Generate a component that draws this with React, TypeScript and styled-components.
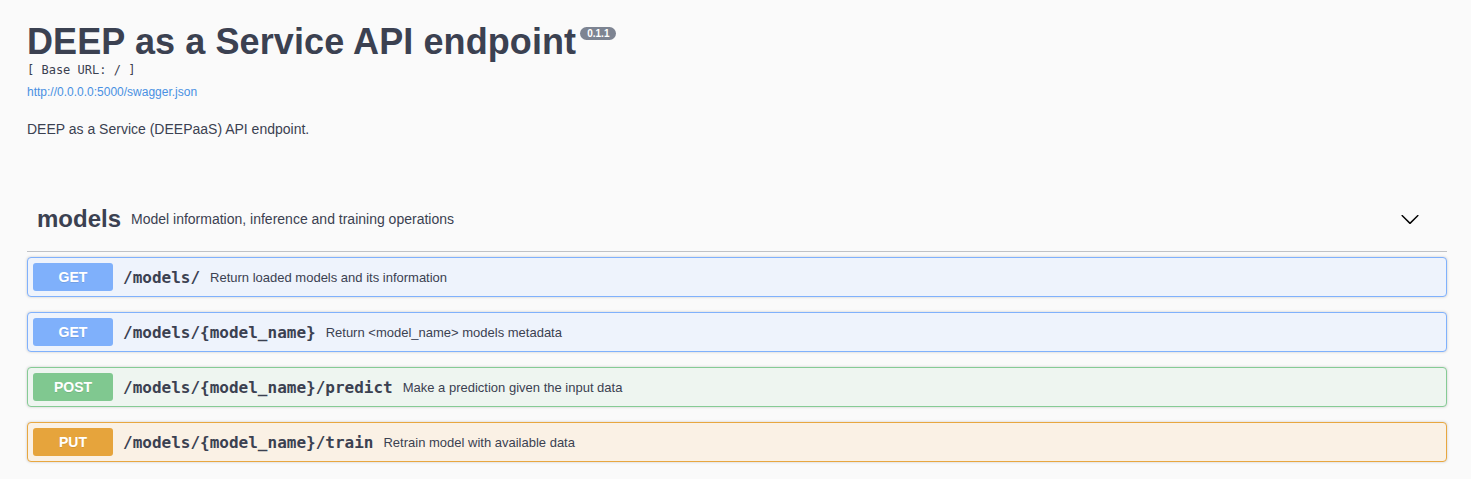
import React from "react";
import styled, { createGlobalStyle } from "styled-components";

const Global = createGlobalStyle`
  html, body { margin: 0; padding: 0; background: #fafafa; }
  body { font-family: "Liberation Sans", Arial, sans-serif; color: #3b4151; }
`;

const Page = styled.div`
  width: 1420px;
  padding: 0 0 0 27px;
`;

const Info = styled.div`
  padding-top: 21px;
`;

const Title = styled.h2`
  margin: 0;
  font-size: 36px;
  font-weight: 700;
  line-height: 42px;
  letter-spacing: 0.1px;
  color: #3b4151;
  display: flex;
  align-items: flex-start;
`;

const Version = styled.small`
  display: inline-block;
  margin: 6px 0 0 4px;
  padding: 1px 7px;
  border-radius: 57px;
  background: #7d8492;
  color: #fff;
  font-size: 10px;
  font-weight: 700;
  line-height: 11px;
  letter-spacing: 0;
  font-family: "Liberation Sans", Arial, sans-serif;
`;

const BaseUrl = styled.pre`
  margin: 0;
  font-family: "DejaVu Sans Mono", monospace;
  font-size: 12px;
  line-height: 14px;
  color: #3b4151;
`;

const Link = styled.a`
  display: block;
  margin-top: 8px;
  font-size: 12px;
  line-height: 14px;
  color: #4990e2;
  text-decoration: none;
`;

const Description = styled.p`
  margin: 22px 0 0;
  font-size: 14px;
  line-height: 16px;
  color: #3b4151;
`;

const Tag = styled.section`
  margin-top: 53px;
`;

const TagHeader = styled.h3`
  margin: 0 0 5px;
  padding: 15px 0 18px 10px;
  display: flex;
  align-items: center;
  border-bottom: 1px solid rgba(59, 65, 81, 0.3);
  font-size: 24px;
  line-height: 28px;
  font-weight: 700;
  color: #3b4151;
`;

const TagDesc = styled.small`
  flex: 1;
  padding: 0 10px;
  font-size: 14px;
  font-weight: 400;
  line-height: 16px;
`;

const Expand = styled.button`
  border: none;
  background: none;
  padding: 0;
  margin-right: 27px;
  display: flex;
  cursor: pointer;
`;

type Method = "get" | "post" | "put";

const palette: Record<Method, { bg: string; border: string; badge: string }> = {
  get: { bg: "#eef3fc", border: "#80b1fc", badge: "#7fb0fb" },
  post: { bg: "#eef5f0", border: "#86cb95", badge: "#80c890" },
  put: { bg: "#faf1e5", border: "#e8a740", badge: "#e6a43c" },
};

const Block = styled.div<{ $m: Method }>`
  display: flex;
  align-items: center;
  margin-bottom: 15px;
  padding: 5px;
  height: 28px;
  border: 1px solid ${(p) => palette[p.$m].border};
  background: ${(p) => palette[p.$m].bg};
  border-radius: 4px;
  box-shadow: 0 0 3px rgba(0, 0, 0, 0.19);
`;

const Badge = styled.span<{ $m: Method }>`
  width: 80px;
  height: 28px;
  display: flex;
  align-items: center;
  justify-content: center;
  border-radius: 3px;
  background: ${(p) => palette[p.$m].badge};
  color: #fff;
  font-size: 14px;
  font-weight: 700;
  text-shadow: 0 1px 0 rgba(0, 0, 0, 0.1);
`;

const Path = styled.span`
  padding: 0 10px;
  font-family: "DejaVu Sans Mono", monospace;
  font-size: 16px;
  font-weight: 700;
  color: #3b4151;
`;

const Summary = styled.span`
  font-size: 13px;
  color: #3b4151;
`;

const ops: { m: Method; label: string; path: string; summary: string }[] = [
  { m: "get", label: "GET", path: "/models/", summary: "Return loaded models and its information" },
  { m: "get", label: "GET", path: "/models/{model_name}", summary: "Return <model_name> models metadata" },
  { m: "post", label: "POST", path: "/models/{model_name}/predict", summary: "Make a prediction given the input data" },
  { m: "put", label: "PUT", path: "/models/{model_name}/train", summary: "Retrain model with available data" },
];

export default function App() {
  return (
    <>
      <Global />
      <Page>
        <Info>
          <Title>
            DEEP as a Service API endpoint
            <Version>0.1.1</Version>
          </Title>
          <BaseUrl>[ Base URL: / ]</BaseUrl>
          <Link href="#">http://0.0.0.0:5000/swagger.json</Link>
          <Description>DEEP as a Service (DEEPaaS) API endpoint.</Description>
        </Info>
        <Tag>
          <TagHeader>
            <span>models</span>
            <TagDesc>Model information, inference and training operations</TagDesc>
            <Expand aria-label="collapse">
              <svg width="20" height="20" viewBox="0 0 20 20">
                <path
                  fill="#000"
                  d="M17.418 6.109c.272-.268.709-.268.979 0s.271.701 0 .969l-7.908 7.83c-.27.268-.707.268-.979 0l-7.908-7.83c-.27-.268-.27-.701 0-.969.271-.268.709-.268.979 0L10 13.25l7.418-7.141z"
                />
              </svg>
            </Expand>
          </TagHeader>
          {ops.map((o) => (
            <Block key={o.path} $m={o.m}>
              <Badge $m={o.m}>{o.label}</Badge>
              <Path>{o.path}</Path>
              <Summary>{o.summary}</Summary>
            </Block>
          ))}
        </Tag>
      </Page>
    </>
  );
}
